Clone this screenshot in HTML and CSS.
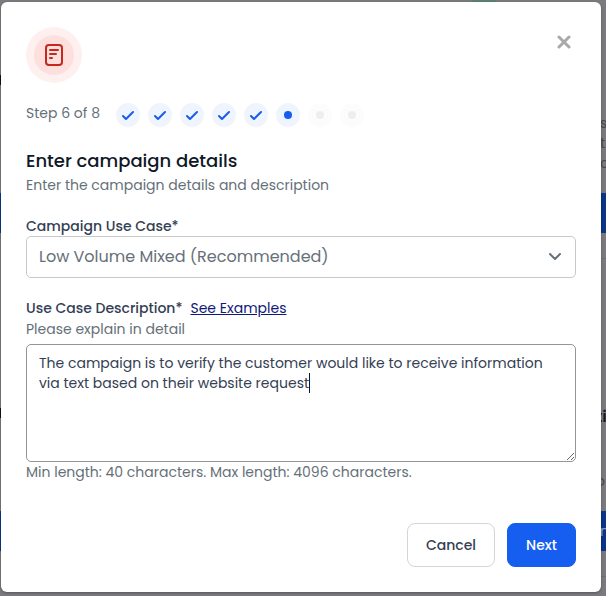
FILE: index.html
```html
<!DOCTYPE html>
<html lang="en">
<head>
<meta charset="utf-8">
<meta name="viewport" content="width=device-width, initial-scale=1">
<title>Enter campaign details</title>
<link rel="stylesheet" href="styles.css">
</head>
<body>
<div class="page" aria-hidden="true">
  <div class="page-badge"></div>
  <div class="edge edge-left">
    <div class="card"><div class="mark"></div><div class="bar"></div></div>
    <div class="card"><div class="mark"></div><div class="bar"></div></div>
  </div>
  <div class="edge edge-right">
    <div class="card"><p class="copy">s<br>tr<br>c</p><div class="bar"></div><div class="rule"></div></div>
    <div class="card"><strong class="card-title">ti</strong><p class="copy">o</p><div class="bar">n</div><div class="rule"></div></div>
  </div>
</div>
<main class="modal" role="dialog" aria-labelledby="title">
  <header class="top">
    <span class="emblem"><span class="emblem-core">
      <svg width="20" height="24" viewBox="0 0 20 24" fill="none" stroke="#c4281e" stroke-width="2" stroke-linecap="round"><rect x="2" y="2" width="16" height="20" rx="3"/><path d="M6 7h8M6 11h6M6 15h2"/></svg>
    </span></span>
    <button class="close" type="button" aria-label="Close"><svg width="14" height="14" viewBox="0 0 14 14" fill="none" stroke="#a9a9a9" stroke-width="3" stroke-linecap="round"><path d="M2 2l10 10M12 2L2 12"/></svg></button>
  </header>
  <div class="progress">
    <span class="progress-text">Step 6 of 8</span>
    <ol class="steps">
      <li class="step"><svg width="14" height="12" viewBox="0 0 14 12"><path class="tick" d="M2 7l3 3 7-7"/></svg></li>
      <li class="step"><svg width="14" height="12" viewBox="0 0 14 12"><path class="tick" d="M2 7l3 3 7-7"/></svg></li>
      <li class="step"><svg width="14" height="12" viewBox="0 0 14 12"><path class="tick" d="M2 7l3 3 7-7"/></svg></li>
      <li class="step"><svg width="14" height="12" viewBox="0 0 14 12"><path class="tick" d="M2 7l3 3 7-7"/></svg></li>
      <li class="step"><svg width="14" height="12" viewBox="0 0 14 12"><path class="tick" d="M2 7l3 3 7-7"/></svg></li>
      <li class="step current"></li>
      <li class="step pending"></li>
      <li class="step pending"></li>
    </ol>
  </div>
  <h1 class="title" id="title">Enter campaign details</h1>
  <p class="hint">Enter the campaign details and description</p>
  <form class="form">
    <div class="field">
      <label class="label" for="use-case">Campaign Use Case*</label>
      <div class="select-wrap">
        <select class="select" id="use-case"><option>Low Volume Mixed (Recommended)</option></select>
        <svg class="chevron" width="14" height="10" viewBox="0 0 14 10" fill="none" stroke="#667078" stroke-width="2" stroke-linecap="round" stroke-linejoin="round"><path d="M2 2l5 5 5-5"/></svg>
      </div>
    </div>
    <div class="field">
      <div class="label-row"><label class="label" for="description">Use Case Description*</label><a class="link" href="#">See Examples</a></div>
      <p class="hint">Please explain in detail</p>
      <div class="textarea-wrap">
        <textarea class="textarea" id="description">The campaign is to verify the customer would like to receive information via text based on their website request</textarea>
        <span class="caret"></span>
      </div>
      <p class="hint">Min length: 40 characters. Max length: 4096 characters.</p>
    </div>
    <footer class="actions">
      <button class="button" type="button">Cancel</button>
      <button class="button primary" type="submit">Next</button>
    </footer>
  </form>
</main>
</body>
</html>
```
FILE: styles.css
```css
* { box-sizing: border-box; }
body { margin: 0; min-height: 100vh; background: #7b7a7e; color: #344054; font: 14px/20px Poppins, Inter, sans-serif; }
p, h1, ol { margin: 0; padding: 0; }
button, select, textarea { font: inherit; color: inherit; }

/* Dimmed page behind the dialog */
.page { position: absolute; inset: 0; overflow: hidden; display: flex; justify-content: space-between; }
.page-badge { position: absolute; top: 0; right: 110px; width: 24px; height: 4px; background: #5c8175; }
.edge { overflow: hidden; }
.edge-left { width: 2px; }
.edge-right { width: 6px; }
.card { height: 318px; }
.edge-left .card { padding-top: 75px; }
.mark { height: 10px; background: #101018; }
.edge-left .card + .card { padding-top: 90px; }
.bar { height: 40px; background: #0b3588; color: #8b9bc5; line-height: 40px; }
.edge-left .bar { margin-top: 108px; }
.edge-left .card + .card .bar { margin-top: 93px; }
.edge-right .card { padding-top: 113px; }
.edge-right .bar { margin-top: 20px; }
.edge-right .card + .card { padding-top: 89px; }
.card-title { display: block; color: #171827; font-size: 16px; font-weight: 600; text-indent: -4px; }
.card-title + .copy { margin-top: 44px; text-indent: -4px; }
.copy { color: #45494f; }
.rule { height: 1px; margin-top: 25px; background: #6d6d72; }

.modal { position: relative; margin: 2px 5px 4px 1px; padding: 25px; background: #fff; border-radius: 6px; box-shadow: 0 1px 3px rgba(0, 0, 0, .3); }
.top { display: flex; justify-content: space-between; align-items: flex-start; }
.emblem { display: grid; place-items: center; width: 56px; height: 56px; border-radius: 50%; background: #fef0ef; }
.emblem-core { display: grid; place-items: center; width: 40px; height: 40px; border-radius: 50%; background: #fde0de; }
.close { display: grid; padding: 8px 5px; border: 0; background: none; }
.progress { display: flex; align-items: flex-start; gap: 16px; margin-top: 20px; color: #667078; }
.steps { display: flex; gap: 8px; list-style: none; }
.step { display: grid; place-items: center; width: 24px; height: 24px; border-radius: 50%; background: #eff4ff; }
.tick { fill: none; stroke: #155eef; stroke-width: 2; stroke-linecap: round; stroke-linejoin: round; }
.current::before, .pending::before { content: ""; width: 8px; height: 8px; border-radius: 50%; background: #155eef; }
.pending { background: #fcfcfc; }
.pending::before { background: #eeeeee; }
.title { margin-top: 20px; color: #101828; font-size: 18px; line-height: 28px; font-weight: 500; }
.hint { color: #667078; }
.form { margin-top: 21px; }
.field + .field { margin-top: 20px; }
.label { display: block; font-weight: 500; }
.label-row { display: flex; gap: 8px; margin-bottom: 1px; }
.link { color: #101878; }
.select-wrap, .textarea-wrap { position: relative; }
.select { display: block; width: 100%; height: 42px; padding: 0 40px 0 12px; appearance: none; border: 1px solid #c7c9cb; border-radius: 5px; background: #fff; color: #667078; font-size: 16px; }
.chevron { position: absolute; right: 14px; top: 16px; pointer-events: none; }
.textarea { display: block; width: 100%; height: 118px; margin-top: 5px; padding: 8px 12px; border: 1px solid #929599; border-radius: 5px; outline: 0; resize: vertical; }
.caret { position: absolute; left: 283px; top: 29px; width: 1px; height: 20px; background: #101828; pointer-events: none; }
.actions { display: flex; justify-content: flex-end; gap: 12px; margin-top: 41px; }
.button { height: 44px; padding: 0 18px; border: 1px solid #d3d5d8; border-radius: 8px; background: #fff; font-weight: 500; }
.primary { border-color: #155eef; background: #155eef; color: #fff; }
```
